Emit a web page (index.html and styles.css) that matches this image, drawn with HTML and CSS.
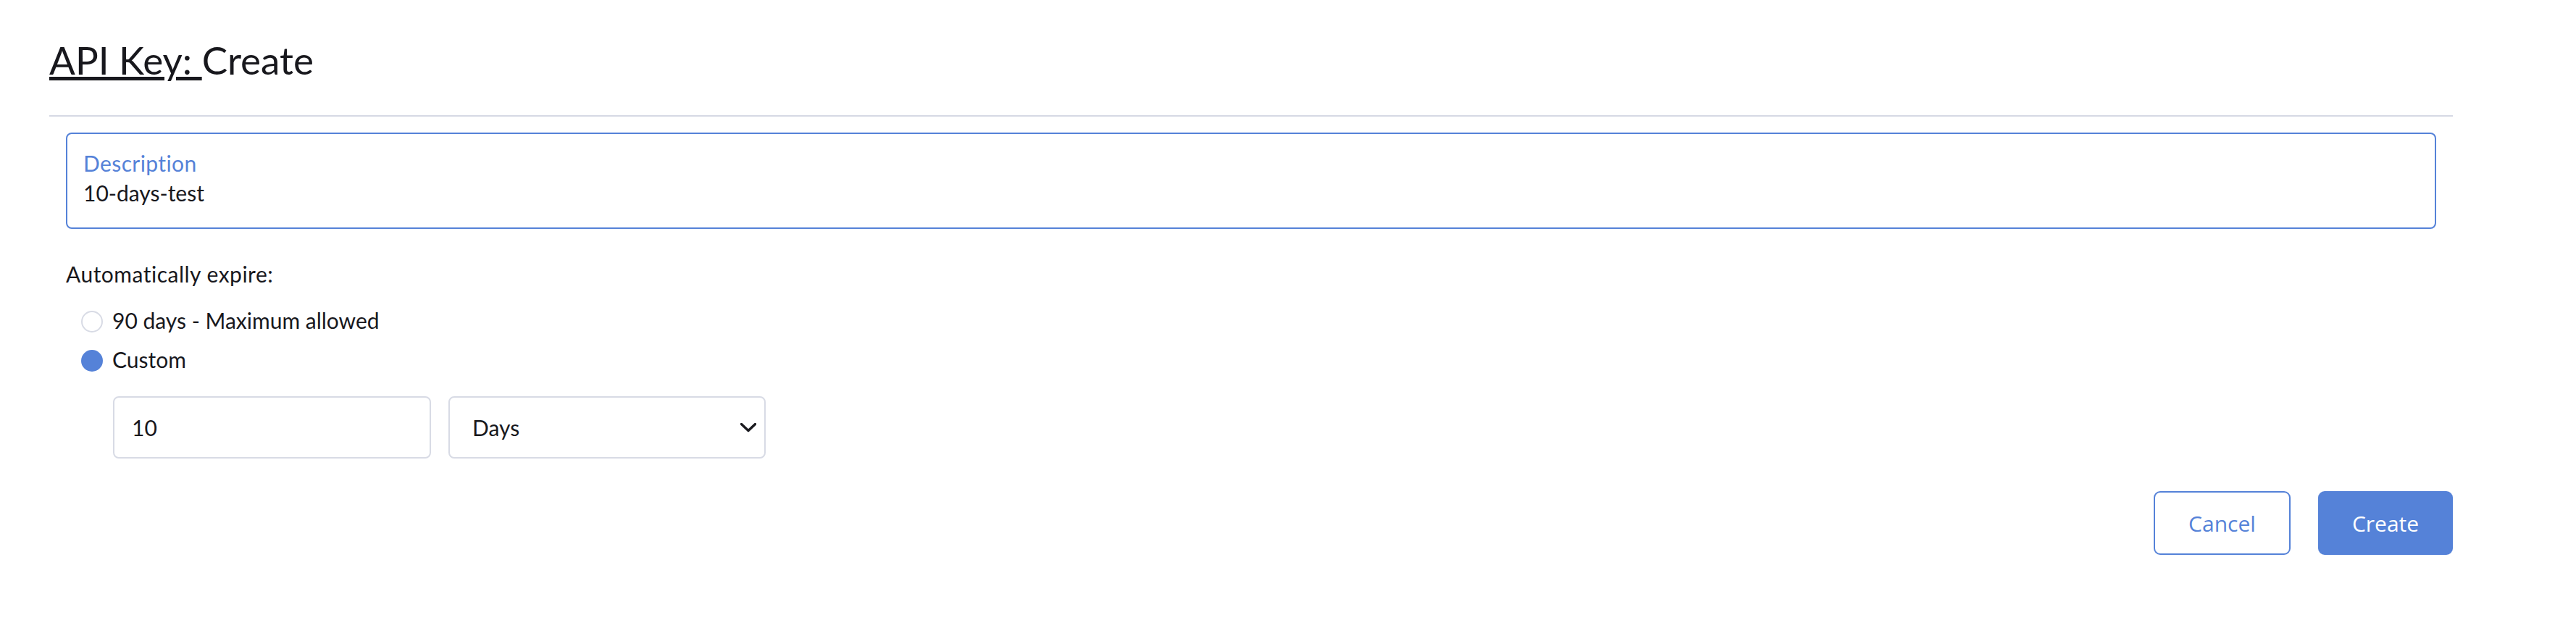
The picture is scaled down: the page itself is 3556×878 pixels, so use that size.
FILE: index.html
```html
<!DOCTYPE html>
<html lang="en">
<head>
<meta charset="utf-8">
<title>API Key: Create</title>
<link rel="stylesheet" href="styles.css">
</head>
<body>
<main class="page">
  <h1 class="title"><a class="crumb" href="#">API Key: </a>Create</h1>
  <hr class="rule">
  <form class="form">
    <div class="field field--focus">
      <label class="field__label">Description</label>
      <div class="field__value">10-days-test</div>
    </div>
    <div class="expire">
      <div class="expire__label">Automatically expire:</div>
      <div class="radio">
        <span class="radio__dot"></span>
        <span class="radio__text">90 days - Maximum allowed</span>
      </div>
      <div class="radio radio--checked">
        <span class="radio__dot"></span>
        <span class="radio__text">Custom</span>
      </div>
      <div class="custom">
        <div class="box box--input">10</div>
        <div class="box box--select">
          <span>Days</span>
          <svg class="chev" width="22" height="13" viewBox="0 0 22 13"><polyline points="1.5,1.5 11,10.5 20.5,1.5" fill="none" stroke="#1a1a1f" stroke-width="3.4" stroke-linecap="round" stroke-linejoin="round"/></svg>
        </div>
      </div>
    </div>
    <div class="actions">
      <button type="button" class="btn btn--ghost">Cancel</button>
      <button type="button" class="btn btn--primary">Create</button>
    </div>
  </form>
</main>
</body>
</html>
```
FILE: styles.css
```css
html, body {
  margin: 0;
  padding: 0;
  background: #ffffff;
}
body {
  font-family: "Lato", "Noto Sans", sans-serif;
  font-variant-ligatures: none;
  font-feature-settings: "liga" 0, "clig" 0;
  color: #18181d;
}
.page {
  margin-left: 68px;
  width: 3318px;
}
.title {
  margin: 52px 0 0;
  font-size: 53px;
  line-height: 62px;
  font-weight: 400;
  color: #18181d;
}
.crumb {
  color: #18181d;
  text-decoration: underline;
  text-decoration-thickness: 5px;
  text-underline-offset: 3px;
}
.rule {
  margin: 45px 0 0;
  border: 0;
  height: 2px;
  background: #d6d9e4;
}
.form {
  padding: 22px 23px 0;
}
.field {
  border: 2px solid #5582d8;
  border-radius: 8px;
  padding: 20px 22px 28px;
  height: 133px;
  box-sizing: border-box;
}
.field__label {
  display: block;
  font-size: 30px;
  line-height: 40px;
  letter-spacing: 0.4px;
  color: #5582d8;
  margin-bottom: 1px;
}
.field__value {
  font-size: 30px;
  line-height: 40px;
}
.expire {
  margin-top: 42px;
  font-size: 30px;
  line-height: 40px;
}
.expire__label {
  margin-bottom: 24px;
  letter-spacing: 0.5px;
}
.radio {
  display: flex;
  align-items: center;
  padding-left: 21px;
  height: 40px;
  margin-bottom: 14px;
}
.radio__dot {
  width: 30px;
  height: 30px;
  box-sizing: border-box;
  border-radius: 50%;
  border: 2.5px solid #d8dbe5;
  margin: 3px 13px 0 0;
  flex: none;
}
.radio--checked .radio__dot {
  border: 0;
  background: #5582d8;
}
.custom {
  display: flex;
  gap: 24px;
  margin: 31px 0 0 65px;
}
.box {
  box-sizing: border-box;
  height: 86px;
  border: 2px solid #d8dbe5;
  border-radius: 8px;
  display: flex;
  align-items: center;
}
.box--input {
  width: 439px;
  padding-left: 24px;
}
.box--select {
  width: 438px;
  padding: 0 11px 0 31px;
  justify-content: space-between;
}
.chev {
  display: block;
}
.actions {
  display: flex;
  justify-content: flex-end;
  gap: 38px;
  margin: 45px -23px 0 0;
}
.btn {
  box-sizing: border-box;
  height: 88px;
  border-radius: 9px;
  font-family: "Open Sans", "Noto Sans", sans-serif;
  font-size: 30px;
  cursor: pointer;
}
.btn--ghost {
  width: 189px;
  background: #ffffff;
  border: 2px solid #5582d8;
  color: #5582d8;
}
.btn--primary {
  width: 186px;
  background: #5582d8;
  border: 0;
  color: #ffffff;
}
```
